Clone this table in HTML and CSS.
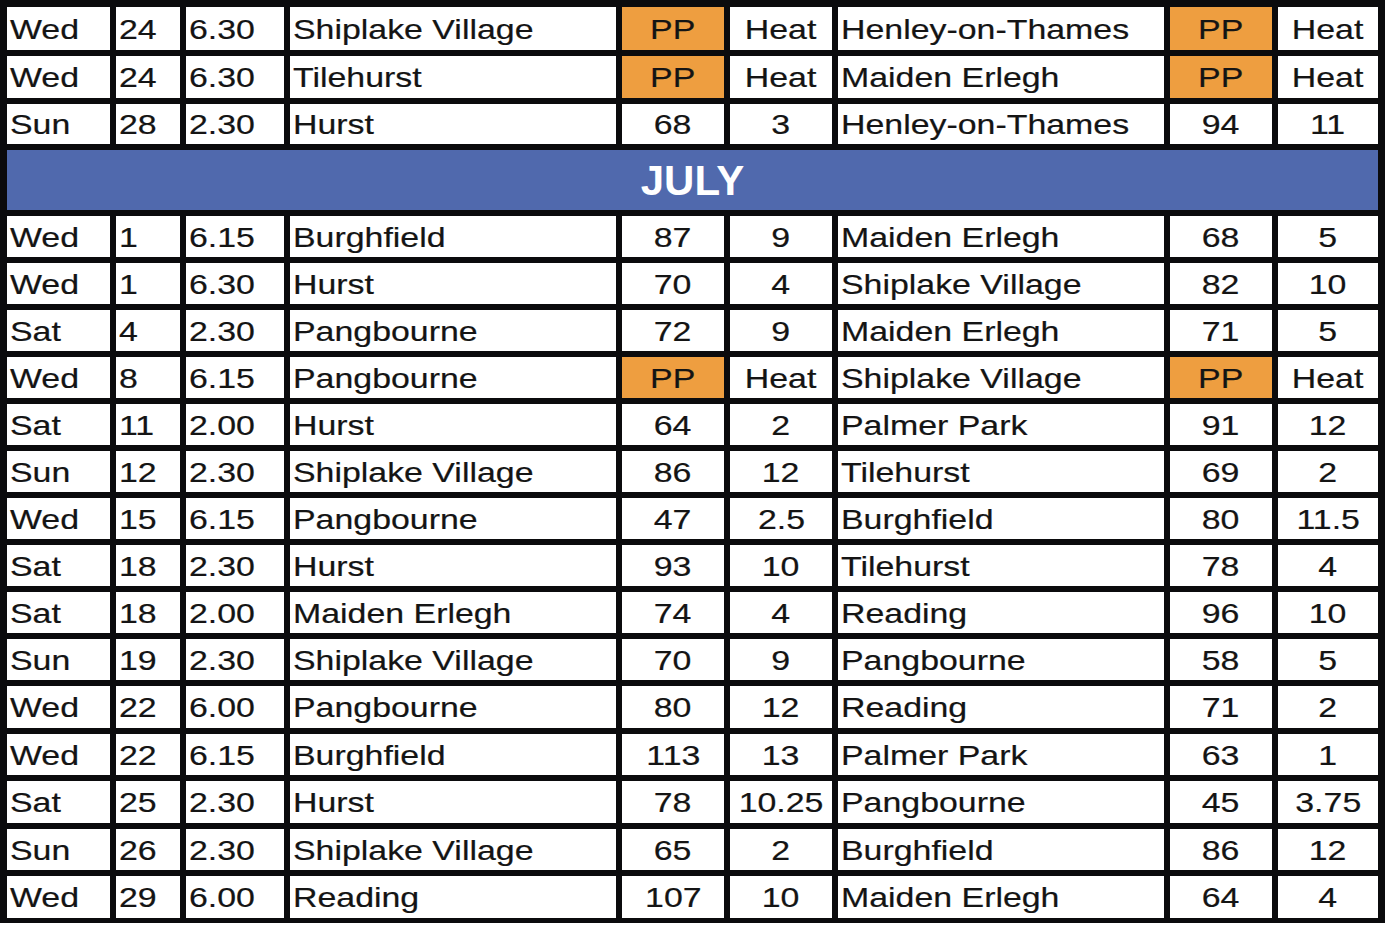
FILE: index.html
```html
<!DOCTYPE html>
<html lang="en">
<head>
<meta charset="utf-8">
<title>Fixtures</title>
<link rel="stylesheet" href="styles.css">
</head>
<body>
<div class="grid">
  <div class="c"><span>Wed</span></div><div class="c"><span>24</span></div><div class="c"><span>6.30</span></div><div class="c"><span>Shiplake Village</span></div><div class="c m pp"><span>PP</span></div><div class="c m"><span>Heat</span></div><div class="c"><span>Henley-on-Thames</span></div><div class="c m pp"><span>PP</span></div><div class="c m"><span>Heat</span></div>
  <div class="c"><span>Wed</span></div><div class="c"><span>24</span></div><div class="c"><span>6.30</span></div><div class="c"><span>Tilehurst</span></div><div class="c m pp"><span>PP</span></div><div class="c m"><span>Heat</span></div><div class="c"><span>Maiden Erlegh</span></div><div class="c m pp"><span>PP</span></div><div class="c m"><span>Heat</span></div>
  <div class="c"><span>Sun</span></div><div class="c"><span>28</span></div><div class="c"><span>2.30</span></div><div class="c"><span>Hurst</span></div><div class="c m"><span>68</span></div><div class="c m"><span>3</span></div><div class="c"><span>Henley-on-Thames</span></div><div class="c m"><span>94</span></div><div class="c m"><span>11</span></div>
  <div class="month">JULY</div>
  <div class="c"><span>Wed</span></div><div class="c"><span>1</span></div><div class="c"><span>6.15</span></div><div class="c"><span>Burghfield</span></div><div class="c m"><span>87</span></div><div class="c m"><span>9</span></div><div class="c"><span>Maiden Erlegh</span></div><div class="c m"><span>68</span></div><div class="c m"><span>5</span></div>
  <div class="c"><span>Wed</span></div><div class="c"><span>1</span></div><div class="c"><span>6.30</span></div><div class="c"><span>Hurst</span></div><div class="c m"><span>70</span></div><div class="c m"><span>4</span></div><div class="c"><span>Shiplake Village</span></div><div class="c m"><span>82</span></div><div class="c m"><span>10</span></div>
  <div class="c"><span>Sat</span></div><div class="c"><span>4</span></div><div class="c"><span>2.30</span></div><div class="c"><span>Pangbourne</span></div><div class="c m"><span>72</span></div><div class="c m"><span>9</span></div><div class="c"><span>Maiden Erlegh</span></div><div class="c m"><span>71</span></div><div class="c m"><span>5</span></div>
  <div class="c"><span>Wed</span></div><div class="c"><span>8</span></div><div class="c"><span>6.15</span></div><div class="c"><span>Pangbourne</span></div><div class="c m pp"><span>PP</span></div><div class="c m"><span>Heat</span></div><div class="c"><span>Shiplake Village</span></div><div class="c m pp"><span>PP</span></div><div class="c m"><span>Heat</span></div>
  <div class="c"><span>Sat</span></div><div class="c"><span>11</span></div><div class="c"><span>2.00</span></div><div class="c"><span>Hurst</span></div><div class="c m"><span>64</span></div><div class="c m"><span>2</span></div><div class="c"><span>Palmer Park</span></div><div class="c m"><span>91</span></div><div class="c m"><span>12</span></div>
  <div class="c"><span>Sun</span></div><div class="c"><span>12</span></div><div class="c"><span>2.30</span></div><div class="c"><span>Shiplake Village</span></div><div class="c m"><span>86</span></div><div class="c m"><span>12</span></div><div class="c"><span>Tilehurst</span></div><div class="c m"><span>69</span></div><div class="c m"><span>2</span></div>
  <div class="c"><span>Wed</span></div><div class="c"><span>15</span></div><div class="c"><span>6.15</span></div><div class="c"><span>Pangbourne</span></div><div class="c m"><span>47</span></div><div class="c m"><span>2.5</span></div><div class="c"><span>Burghfield</span></div><div class="c m"><span>80</span></div><div class="c m"><span>11.5</span></div>
  <div class="c"><span>Sat</span></div><div class="c"><span>18</span></div><div class="c"><span>2.30</span></div><div class="c"><span>Hurst</span></div><div class="c m"><span>93</span></div><div class="c m"><span>10</span></div><div class="c"><span>Tilehurst</span></div><div class="c m"><span>78</span></div><div class="c m"><span>4</span></div>
  <div class="c"><span>Sat</span></div><div class="c"><span>18</span></div><div class="c"><span>2.00</span></div><div class="c"><span>Maiden Erlegh</span></div><div class="c m"><span>74</span></div><div class="c m"><span>4</span></div><div class="c"><span>Reading</span></div><div class="c m"><span>96</span></div><div class="c m"><span>10</span></div>
  <div class="c"><span>Sun</span></div><div class="c"><span>19</span></div><div class="c"><span>2.30</span></div><div class="c"><span>Shiplake Village</span></div><div class="c m"><span>70</span></div><div class="c m"><span>9</span></div><div class="c"><span>Pangbourne</span></div><div class="c m"><span>58</span></div><div class="c m"><span>5</span></div>
  <div class="c"><span>Wed</span></div><div class="c"><span>22</span></div><div class="c"><span>6.00</span></div><div class="c"><span>Pangbourne</span></div><div class="c m"><span>80</span></div><div class="c m"><span>12</span></div><div class="c"><span>Reading</span></div><div class="c m"><span>71</span></div><div class="c m"><span>2</span></div>
  <div class="c"><span>Wed</span></div><div class="c"><span>22</span></div><div class="c"><span>6.15</span></div><div class="c"><span>Burghfield</span></div><div class="c m"><span>113</span></div><div class="c m"><span>13</span></div><div class="c"><span>Palmer Park</span></div><div class="c m"><span>63</span></div><div class="c m"><span>1</span></div>
  <div class="c"><span>Sat</span></div><div class="c"><span>25</span></div><div class="c"><span>2.30</span></div><div class="c"><span>Hurst</span></div><div class="c m"><span>78</span></div><div class="c m"><span>10.25</span></div><div class="c"><span>Pangbourne</span></div><div class="c m"><span>45</span></div><div class="c m"><span>3.75</span></div>
  <div class="c"><span>Sun</span></div><div class="c"><span>26</span></div><div class="c"><span>2.30</span></div><div class="c"><span>Shiplake Village</span></div><div class="c m"><span>65</span></div><div class="c m"><span>2</span></div><div class="c"><span>Burghfield</span></div><div class="c m"><span>86</span></div><div class="c m"><span>12</span></div>
  <div class="c"><span>Wed</span></div><div class="c"><span>29</span></div><div class="c"><span>6.00</span></div><div class="c"><span>Reading</span></div><div class="c m"><span>107</span></div><div class="c m"><span>10</span></div><div class="c"><span>Maiden Erlegh</span></div><div class="c m"><span>64</span></div><div class="c m"><span>4</span></div>
</div>
</body>
</html>
```

FILE: styles.css
```css
html, body {
  margin: 0;
  padding: 0;
  background: #ffffff;
}

body {
  font-family: "Liberation Sans", Arial, sans-serif;
  color: #141414;
}

.grid {
  display: grid;
  width: 1385px;
  box-sizing: border-box;
  background: #0b0b0d;
  padding: 7px 7px 5px 7px;
  column-gap: 6px;
  row-gap: 6px;
  grid-template-columns: 103px 64px 98px 326px 102px 102px 326px 102px 100px;
  grid-template-rows: 43px 42px 40px 60px 41px 41px 41px 41px 41px 41px 41px 41px 41px 41px 42px 41px 42px 41px 42px;
}

.c {
  background: #ffffff;
  display: flex;
  align-items: center;
  padding-left: 3px;
  padding-top: 2px;
  box-sizing: border-box;
  font-size: 28px;
  line-height: 1;
  overflow: hidden;
  white-space: nowrap;
  -webkit-text-stroke: 0.2px #141414;
}

.c span {
  display: inline-block;
  transform: scaleX(1.21);
  transform-origin: left center;
}

.c.m {
  justify-content: center;
  padding-left: 0;
}

.c.m span {
  transform-origin: center center;
}

.c.pp {
  background: #ee9e40;
}

.month {
  grid-column: 1 / -1;
  background: #5069ad;
  color: #ffffff;
  font-weight: bold;
  font-size: 42px;
  line-height: 1;
  display: flex;
  align-items: center;
  justify-content: center;
  padding-top: 1px;
}
```
